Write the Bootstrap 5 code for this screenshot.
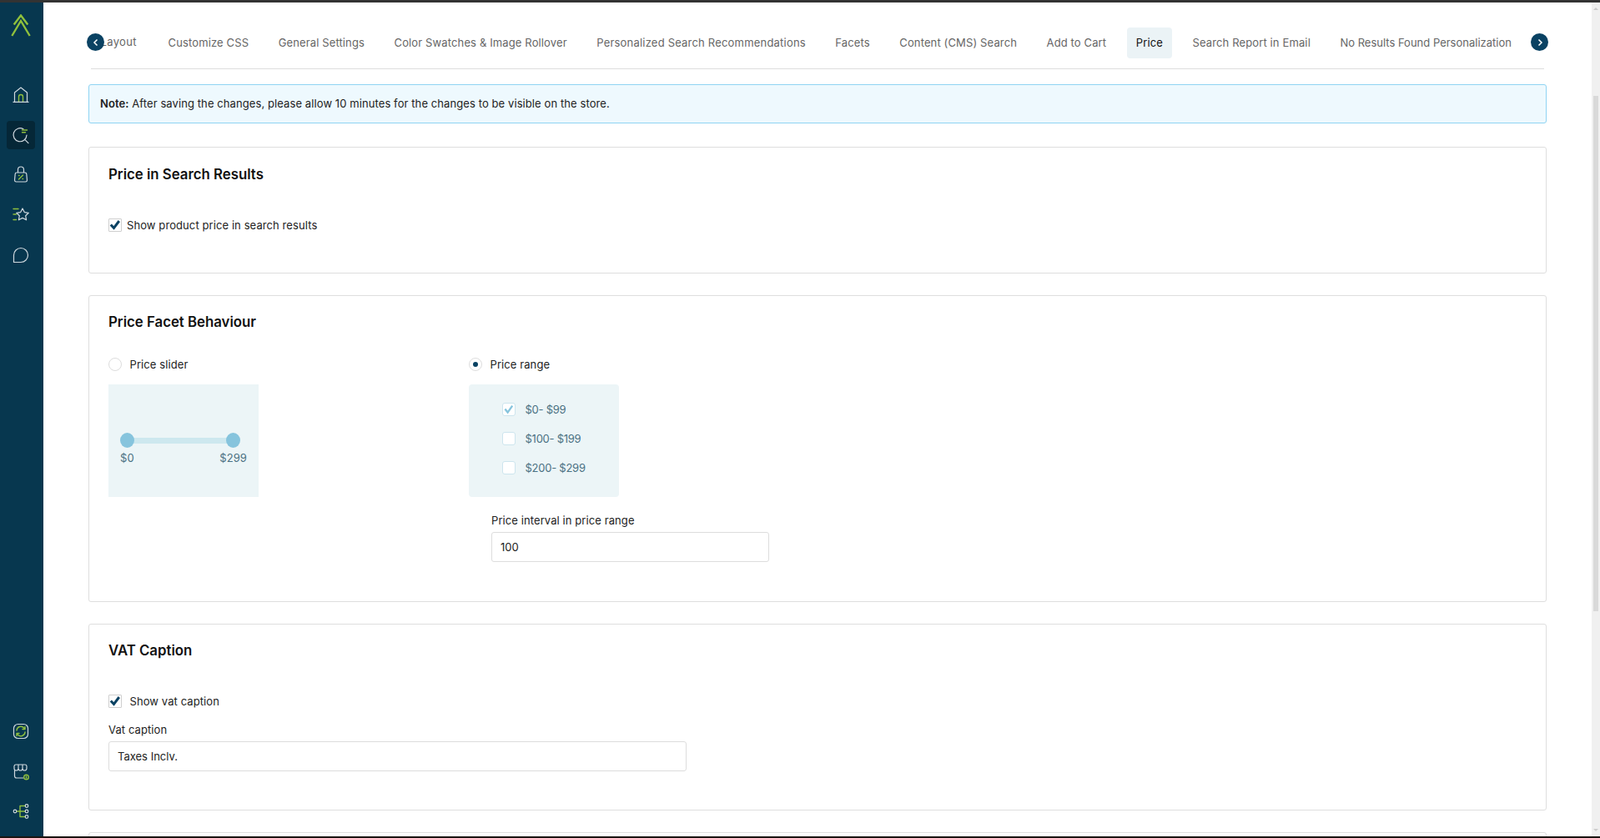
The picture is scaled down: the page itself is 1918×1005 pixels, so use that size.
<!DOCTYPE html>
<html lang="en">
<head>
    <meta charset="UTF-8">
    <meta name="viewport" content="width=device-width, initial-scale=1.0">
    <title>Price settings</title>
    <link href="https://cdn.jsdelivr.net/npm/bootstrap@5.3.3/dist/css/bootstrap.min.css" rel="stylesheet">
    <style>
        html, body { height: 100%; }
        body {
            font-family: Inter, "Noto Sans", sans-serif;
            font-size: 13px;
            letter-spacing: .09px;
            color: #222;
            margin: 0;
            overflow: hidden;
            background: #fff;
        }
        .page-frame { height: 100vh; border-top: 3px solid #333; border-bottom: 2px solid #1a1512; }
        .side-rail { width: 52px; background: #07374f; flex: none; padding: 14px 2px 13px 0; }
        .rail-logo { height: 80px; }
        .rail-item { width: 34px; height: 34px; border-radius: 4px; }
        .rail-item.is-on { background: #052737; }
        .rail-item svg, .rail-logo svg { display: block; }
        .rail-top { gap: 14px; }
        .rail-bottom { gap: 14px; }
        .ic-w { fill: none; stroke: #cfd8de; stroke-width: 1.2; stroke-linecap: round; stroke-linejoin: round; }
        .ic-g { fill: none; stroke: #8fbf3f; stroke-width: 1.4; stroke-linecap: round; stroke-linejoin: round; }

        .main-area { padding: 30px 54px 0; min-width: 0; }
        .fake-scroll { width: 10px; background: #f0f0f0; flex: none; padding: 6px 2px 6px; }
        .fake-thumb { height: 618px; background: #d9d9d9; margin-top: 103px; }
        .scroll-up, .scroll-down { width: 0; height: 0; margin: 0 auto; border-left: 3px solid transparent; border-right: 3px solid transparent; }
        .scroll-up { border-bottom: 3px solid #ccc; }
        .scroll-down { border-top: 3px solid #ccc; }

        .tab-strip { margin: 0 3px; border-bottom: 1px solid #ddd; padding-bottom: 12px; position: relative; }
        .tab-item { color: #666; padding: 0 11px; height: 37px; line-height: 37px; border-radius: 4px; white-space: nowrap; margin-right: 13.5px; letter-spacing: .13px; text-decoration: none; }
        .tab-item.is-on { background: #ebf3f6; color: #111; }
        .tab-item.first-tab { margin-left: .5px; margin-right: 15.7px; line-height: 35px; letter-spacing: .35px; }
        .tab-item.wide-tab { letter-spacing: .2px; }
        .tab-item.snug-tab { letter-spacing: 0; }
        .tab-arrow { position: absolute; top: 7px; width: 21px; height: 21px; border-radius: 50%; background: #0a4263; padding: 0; border: 0; }
        .tab-arrow svg { display: block; margin: auto; }
        .arrow-left { left: -5px; }
        .arrow-right { right: -5px; }

        .note-box { margin-top: 18px; margin-bottom: 28px; background: #eef9fe; border: 1px solid #8fd4f3; border-radius: 3px; color: #222; padding: 0 13px; height: 47px; line-height: 45px; }
        .note-box b { font-weight: 600; }

        .set-card { border: 1px solid #dedede; border-radius: 3px; margin-bottom: 26px; padding: 19px 23px 47px; }
        .set-card.title-low { padding-top: 20px; }
        .set-card.vat-card { padding-bottom: 46px; }
        .set-title { font-size: 16.8px; font-weight: 600; color: #111; line-height: 24px; margin: 0; letter-spacing: 0; }
        .opt-row { height: 20px; line-height: 20px; padding: 0; margin: 0; min-height: 0; }
        .opt-row .form-check-input { margin: 0; width: 16px; height: 16px; flex: none; float: none; border: 1px solid #cfcfcf; border-radius: 1px; box-shadow: none; }
        .opt-row .form-check-input:checked { background-color: #fff; border-color: #cfcfcf; background-size: 16px; }
        .opt-row .form-check-input[type=checkbox]:checked { --bs-form-check-bg-image: url("data:image/svg+xml,%3csvg xmlns='http://www.w3.org/2000/svg' viewBox='0 0 16 16'%3e%3cpath fill='none' stroke='%230a4263' stroke-width='3' d='M2.800 7.400l3.700 4 6.300-8.400'/%3e%3c/svg%3e"); }
        .opt-row .form-check-input[type=radio] { border-radius: 50%; border-color: #ddd; }
        .opt-row .form-check-input[type=radio]:checked { --bs-form-check-bg-image: url("data:image/svg+xml,%3csvg xmlns='http://www.w3.org/2000/svg' viewBox='-4 -4 8 8'%3e%3ccircle r='1.500' fill='%230a4263'/%3e%3c/svg%3e"); background-size: 16px; }
        .opt-row .form-check-label { margin-left: 9.5px; }
        .opt-row.tight .form-check-label { margin-left: 6px; }

        .first-row { margin-top: 39px; }
        .radio-row { margin-top: 29px; }
        .facet-col { width: 432px; flex: none; }
        .demo-panel { width: 180px; height: 135px; background: #ecf5f7; margin-top: 14px; color: #4b7183; }
        .demo-panel.rounded-one { border-radius: 4px; padding: 20px 0 0 40px; }
        .demo-panel.slider-one { padding: 58px 14px 0; }
        .slide-track { position: relative; height: 18px; margin-right: 8px; }
        .slide-line { position: absolute; left: 4px; right: 4px; top: 6px; height: 7px; background: #cde8ef; }
        .slide-dot { position: absolute; top: 0; width: 17px; height: 18px; border-radius: 50%; background: #86c4dd; }
        .slide-dot.dot-a { left: 0; }
        .slide-dot.dot-b { right: 0; }
        .slide-nums { line-height: 20px; margin-top: 2px; }
        .range-list { gap: 15px; }
        .opt-row.range-row .form-check-input { border-color: #cde5ee; border-radius: 3px; }
        .opt-row.range-row .form-check-input[type=checkbox]:checked { --bs-form-check-bg-image: url("data:image/svg+xml,%3csvg xmlns='http://www.w3.org/2000/svg' viewBox='0 0 16 16'%3e%3cpath fill='none' stroke='%2386c4dd' stroke-width='2.400' d='M3.400 7.600l3.200 4 5.600-8'/%3e%3c/svg%3e"); }
        .opt-row.range-row .form-check-label { margin-left: 11.5px; letter-spacing: -.25px; }

        .field-label { line-height: 20px; margin: 0 0 4px; color: #222; }
        .field-input { height: 36px; font-size: 13px; color: #222; border: 1px solid #ddd; border-radius: 3px; padding: 0 10px; font-family: inherit; }
        .interval-box { margin: 18px 0 0 27px; width: 333px; }
        .vat-box { width: 693px; margin-top: 14px; }
        .last-card { height: 40px; margin: 0; }
    </style>
</head>
<body>
    <div class="page-frame d-flex">
        <nav class="side-rail d-flex flex-column align-items-center">
            <div class="rail-logo">
                <svg width="26" height="28" viewBox="0 0 26 28"><path d="M4.700 12.500 13 1.500l8.300 11M2.300 26 13 8l10.700 18" fill="none" stroke="#8fc03c" stroke-width="2.400"/></svg>
            </div>
            <div class="rail-top d-flex flex-column">
                <div class="rail-item">
                    <svg width="34" height="34" viewBox="0 0 34 34"><path class="ic-g" d="M14.500 25v-6a2.500 2.500 0 0 1 5 0v6"/><path class="ic-w" d="M9.500 25V14l7.500-6 7.500 6v11M8 25.400h18"/></svg>
                </div>
                <div class="rail-item is-on">
                    <svg width="34" height="34" viewBox="0 0 34 34"><path class="ic-w" d="M20 9.800a8 8 0 1 0 4 7.200M22 22.600l4 4"/><path class="ic-g" d="M18.500 11h6M18.500 13.700h4"/></svg>
                </div>
                <div class="rail-item">
                    <svg width="34" height="34" viewBox="0 0 34 34"><g transform="translate(0 -1)"><path class="ic-w" d="M12 15h10a1.800 1.800 0 0 1 1.800 1.800l.7 7.500a1.900 1.900 0 0 1-1.900 1.700h-11.200a1.900 1.900 0 0 1-1.900-1.700l.7-7.500A1.800 1.800 0 0 1 12 15zM13.500 15v-3.500a3.500 3.500 0 0 1 7 0V15"/><path class="ic-g" d="M14.500 23l5-5M14.500 18.500h.6M19 22.500h.6"/></g></svg>
                </div>
                <div class="rail-item">
                    <svg width="34" height="34" viewBox="0 0 34 34"><g transform="translate(0 -1)"><path class="ic-w" d="M19 10l2.300 4.600 5 .7-3.600 3.500.9 5-4.600-2.400-4.600 2.400.9-5-3.600-3.500 5-.7z"/><path class="ic-g" d="M8 10.500h6M8 17h3.500M8 23.500h3.500"/></g></svg>
                </div>
                <div class="rail-item">
                    <svg width="34" height="34" viewBox="0 0 34 34"><path class="ic-w" d="M17 8.500a8.500 8.500 0 1 1 0 17H8.500V17A8.500 8.500 0 0 1 17 8.500z"/></svg>
                </div>
            </div>
            <div class="rail-bottom d-flex flex-column mt-auto">
                <div class="rail-item">
                    <svg width="34" height="34" viewBox="0 0 34 34"><rect class="ic-w" x="8.500" y="8.500" width="17" height="17" rx="5"/><path class="ic-g" d="M12 16a5 5 0 0 1 8.800-3l1.200 1.500M22 18a5 5 0 0 1-8.800 3L12 19.500M22 11.500v3h-3M12 22.500v-3h3"/></svg>
                </div>
                <div class="rail-item">
                    <svg width="34" height="34" viewBox="0 0 34 34"><path class="ic-w" d="M9 13.500V10.800A2 2 0 0 1 11 9h11a2 2 0 0 1 2 1.800v2.700a2.500 2.500 0 0 1-5 0 2.500 2.500 0 0 1-2.500 2.500 2.500 2.500 0 0 1-2.500-2.500 2.500 2.500 0 0 1-5 0zM14 9v4.500M19 9v4.500M9.500 15.500v7a2.500 2.500 0 0 0 2.500 2.500h8"/><circle class="ic-g" cx="23.500" cy="24" r="2.800"/><path class="ic-g" d="M23.500 23v2"/></svg>
                </div>
                <div class="rail-item">
                    <svg width="34" height="34" viewBox="0 0 34 34"><path class="ic-g" d="M12 17h10M16 10.500v13M16 10.500h6M16 23.500h6"/><circle class="ic-w" cx="10" cy="17" r="1.800"/><circle class="ic-w" cx="24" cy="10.500" r="1.800"/><circle class="ic-w" cx="24" cy="17" r="1.800"/><circle class="ic-w" cx="24" cy="23.500" r="1.800"/></svg>
                </div>
            </div>
        </nav>

        <main class="main-area flex-grow-1 overflow-hidden">
            <div class="tab-strip nav flex-nowrap">
                <a class="tab-item first-tab">Layout</a>
                <a class="tab-item">Customize CSS</a>
                <a class="tab-item">General Settings</a>
                <a class="tab-item">Color Swatches &amp; Image Rollover</a>
                <a class="tab-item wide-tab">Personalized Search Recommendations</a>
                <a class="tab-item">Facets</a>
                <a class="tab-item">Content (CMS) Search</a>
                <a class="tab-item">Add to Cart</a>
                <a class="tab-item is-on">Price</a>
                <a class="tab-item">Search Report in Email</a>
                <a class="tab-item snug-tab">No Results Found Personalization</a>
                <button class="tab-arrow arrow-left" type="button"><svg width="10" height="10" viewBox="0 0 10 10"><path d="M6.500 1.500 3 5l3.500 3.500" fill="none" stroke="#fff" stroke-width="1.500"/></svg></button>
                <button class="tab-arrow arrow-right" type="button"><svg width="10" height="10" viewBox="0 0 10 10"><path d="M3.500 1.500 7 5 3.500 8.500" fill="none" stroke="#fff" stroke-width="1.500"/></svg></button>
            </div>

            <div class="note-box"><b>Note:</b> After saving the changes, please allow 10 minutes for the changes to be visible on the store.</div>

            <section class="set-card title-low">
                <h5 class="set-title">Price in Search Results</h5>
                <div class="opt-row tight first-row form-check d-flex align-items-center">
                    <input class="form-check-input" type="checkbox" id="showPrice" checked>
                    <label class="form-check-label" for="showPrice">Show product price in search results</label>
                </div>
            </section>

            <section class="set-card">
                <h5 class="set-title">Price Facet Behaviour</h5>
                <div class="d-flex">
                    <div class="facet-col">
                        <div class="opt-row radio-row form-check d-flex align-items-center">
                            <input class="form-check-input" type="radio" name="facetMode" id="modeSlider">
                            <label class="form-check-label" for="modeSlider">Price slider</label>
                        </div>
                        <div class="demo-panel slider-one">
                            <div class="slide-track">
                                <div class="slide-line"></div>
                                <div class="slide-dot dot-a"></div>
                                <div class="slide-dot dot-b"></div>
                            </div>
                            <div class="slide-nums d-flex justify-content-between"><span>$0</span><span>$299</span></div>
                        </div>
                    </div>
                    <div class="facet-col">
                        <div class="opt-row radio-row form-check d-flex align-items-center">
                            <input class="form-check-input" type="radio" name="facetMode" id="modeRange" checked>
                            <label class="form-check-label" for="modeRange">Price range</label>
                        </div>
                        <div class="demo-panel rounded-one">
                            <div class="range-list d-flex flex-column">
                                <div class="opt-row range-row form-check d-flex align-items-center">
                                    <input class="form-check-input" type="checkbox" id="range1" checked>
                                    <label class="form-check-label" for="range1">$0- $99</label>
                                </div>
                                <div class="opt-row range-row form-check d-flex align-items-center">
                                    <input class="form-check-input" type="checkbox" id="range2">
                                    <label class="form-check-label" for="range2">$100- $199</label>
                                </div>
                                <div class="opt-row range-row form-check d-flex align-items-center">
                                    <input class="form-check-input" type="checkbox" id="range3">
                                    <label class="form-check-label" for="range3">$200- $299</label>
                                </div>
                            </div>
                        </div>
                        <div class="interval-box">
                            <label class="field-label d-block" for="intervalInput">Price interval in price range</label>
                            <input class="form-control field-input" id="intervalInput" type="text" value="100">
                        </div>
                    </div>
                </div>
            </section>

            <section class="set-card vat-card">
                <h5 class="set-title">VAT Caption</h5>
                <div class="opt-row first-row form-check d-flex align-items-center">
                    <input class="form-check-input" type="checkbox" id="showVat" checked>
                    <label class="form-check-label" for="showVat">Show vat caption</label>
                </div>
                <div class="vat-box">
                    <label class="field-label d-block" for="vatInput">Vat caption</label>
                    <input class="form-control field-input" id="vatInput" type="text" value="Taxes Inclv.">
                </div>
            </section>

            <section class="set-card last-card"></section>
        </main>

        <div class="fake-scroll d-flex flex-column">
            <div class="scroll-up"></div>
            <div class="fake-thumb"></div>
            <div class="scroll-down mt-auto"></div>
        </div>
    </div>
    <script src="https://cdn.jsdelivr.net/npm/bootstrap@5.3.3/dist/js/bootstrap.bundle.min.js"></script>
</body>
</html>
